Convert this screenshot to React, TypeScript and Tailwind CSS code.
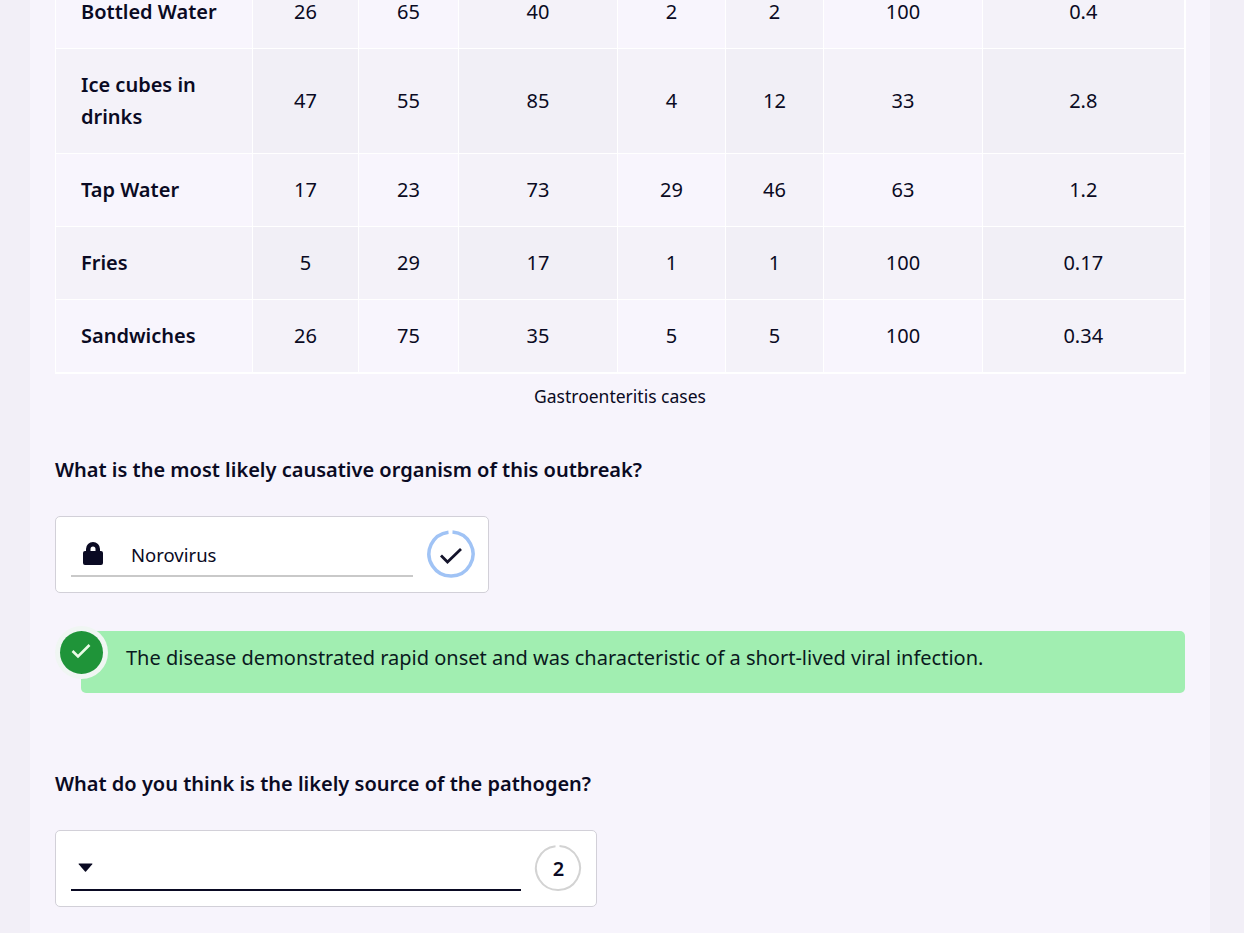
const rows = [
  { name: ['Bottled Water'], cells: ['26', '65', '40', '2', '2', '100', '0.4'], h: 'h-[73px]' },
  { name: ['Ice cubes in', 'drinks'], cells: ['47', '55', '85', '4', '12', '33', '2.8'], h: 'h-[105px]' },
  { name: ['Tap Water'], cells: ['17', '23', '73', '29', '46', '63', '1.2'], h: 'h-[73px]' },
  { name: ['Fries'], cells: ['5', '29', '17', '1', '1', '100', '0.17'], h: 'h-[73px]' },
  { name: ['Sandwiches'], cells: ['26', '75', '35', '5', '5', '100', '0.34'], h: 'h-[73px]' },
];

const colWidths = ['w-[197px]', 'w-[106px]', 'w-[100px]', 'w-[159px]', 'w-[108px]', 'w-[98px]', 'w-[159px]', 'w-[202px]'];

const cellBg = (row: number, col: number) => {
  const oddRow = row % 2 === 0;
  const oddCol = col % 2 === 1;
  if (oddRow) return oddCol ? 'bg-[#f4f2f9]' : 'bg-[#f8f5fd]';
  return oddCol ? 'bg-[#f1eff6]' : 'bg-[#f4f2f9]';
};

const Ring = ({ color, width }: { color: string; width: number }) => (
  <svg viewBox="0 0 48 48" className="absolute inset-0 h-full w-full" fill="none">
    <path d="M25.5 2.05 A22 22 0 1 1 21.5 2.14" stroke={color} strokeWidth={width} />
  </svg>
);

export default function App() {
  return (
    <div className="h-[933px] overflow-hidden bg-[#f2eff7] font-['Noto_Sans',sans-serif] text-[#0a0a23]">
      <div className="ml-[30px] h-[960px] w-[1180px] -translate-y-[25px] bg-[#f7f4fc] px-[25px]">
        <table className="w-[1129px] table-fixed border-collapse border-b-2 border-r-2 border-white text-[20px]">
          <colgroup>
            {colWidths.map((w, i) => (
              <col key={i} className={w} />
            ))}
          </colgroup>
          <tbody>
            {rows.map((row, r) => (
              <tr key={row.name[0]} className={row.h}>
                <th className={`border border-white pl-[25px] text-left text-[20px] font-semibold leading-[32px] ${cellBg(r, 0)}`}>
                  {row.name.map((line) => (
                    <div key={line}>{line}</div>
                  ))}
                </th>
                {row.cells.map((c, i) => (
                  <td key={i} className={`border border-white text-center font-normal ${cellBg(r, i + 1)}`}>
                    {c}
                  </td>
                ))}
              </tr>
            ))}
          </tbody>
        </table>

        <p className="mt-[8px] text-center text-[17.5px] leading-[28px]">Gastroenteritis cases</p>

        <h2 className="mt-[44px] text-[20px] font-semibold leading-[32px]">What is the most likely causative organism of this outbreak?</h2>

        <div className="mt-[30px] flex h-[77px] w-[434px] items-center rounded-[5px] border border-[#d2d0d8] bg-white pl-[15px] pr-[13px]">
          <div className="flex h-[45px] w-[342px] items-center border-b-2 border-[#c9c9c9] pl-[12px]">
            <svg viewBox="0 0 20 23" className="h-[23px] w-[20px]" fill="#0a0a23">
              <path d="M3 9V7a7 7 0 0 1 14 0v2h1a2 2 0 0 1 2 2v10a2 2 0 0 1-2 2H2a2 2 0 0 1-2-2V11a2 2 0 0 1 2-2h1Zm4.5 0h5V7a2.5 2.5 0 0 0-5 0v2Z" />
            </svg>
            <span className="ml-[28px] mt-[4px] text-[18.5px] leading-[32px]">Norovirus</span>
          </div>
          <div className="relative ml-auto flex h-[48px] w-[48px] items-center justify-center">
            <Ring color="#a0c3f5" width={3.5} />
            <svg viewBox="0 0 24 24" className="-ml-[1px] mt-[1px] h-[24px] w-[24px]" fill="none" stroke="#14142b" strokeWidth="2.8">
              <path d="M2 12.5 8.5 19 22 6" />
            </svg>
          </div>
        </div>

        <div className="relative mt-[38px] ml-[26px] flex h-[62px] w-[1104px] rounded-[5px] bg-[#a1eeb1] pl-[45px] pt-[11px] text-[20px] leading-[32px] text-[#0a1a20]">
          <span>The disease demonstrated rapid onset and was characteristic of a short-lived viral infection.</span>
          <div className="absolute -left-[26px] -top-[5px] h-[53px] w-[53px] rounded-full bg-[#f0f6f3]"></div>
          <div className="absolute -left-[21px] top-0 flex h-[43px] w-[43px] items-center justify-center rounded-full bg-[#1f9439]">
            <svg viewBox="0 0 20 20" className="-ml-[1px] -mt-[2px] h-[20px] w-[20px]" fill="none" stroke="#eafbe6" strokeWidth="2.6">
              <path d="M1.5 10 7 15.5 18.5 4" />
            </svg>
          </div>
        </div>

        <h2 className="mt-[75px] text-[20px] font-semibold leading-[32px]">What do you think is the likely source of the pathogen?</h2>

        <div className="mt-[30px] flex h-[77px] w-[542px] items-center rounded-[5px] border border-[#d2d0d8] bg-white pl-[15px] pr-[14px]">
          <div className="flex h-[45px] w-[450px] items-center border-b-2 border-[#0a0a23] pl-[7px]">
            <svg viewBox="0 0 14 9" className="h-[9px] w-[15px]" fill="#0a0a23">
              <path d="M0.5 0.5h13a0.5 0.5 0 0 1 0.3 0.8L7.5 8.5a0.7 0.7 0 0 1-1 0L0.2 1.3A0.5 0.5 0 0 1 0.5 0.5Z" />
            </svg>
          </div>
          <div className="relative ml-auto flex h-[48px] w-[48px] items-center justify-center pl-[1px] pt-[1px] text-[20px] font-semibold">
            <Ring color="#d3d3d3" width={2} />
            2
          </div>
        </div>
      </div>
    </div>
  );
}
